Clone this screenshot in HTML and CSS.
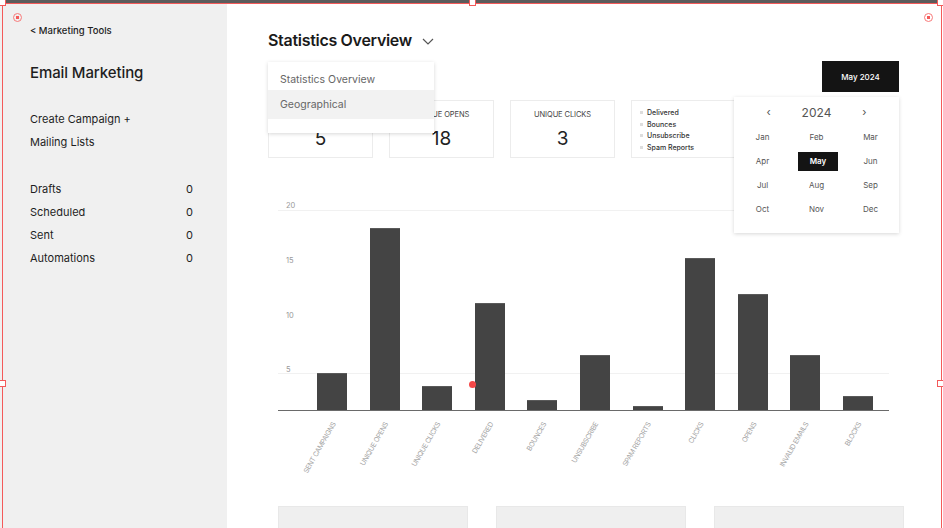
FILE: index.html
```html
<!DOCTYPE html>
<html lang="en">
<head>
<meta charset="utf-8">
<title>Email Marketing – Statistics Overview</title>
<link rel="stylesheet" href="styles.css">
</head>
<body>
<div class="page">
  <div class="topbar"></div>
  <div class="app">
    <aside class="sidebar">
      <div class="back">&lt; Marketing Tools</div>
      <h1 class="side-title">Email Marketing</h1>
      <ul class="side-nav">
        <li>Create Campaign +</li>
        <li>Mailing Lists</li>
      </ul>
      <ul class="side-stats">
        <li><span>Drafts</span><span>0</span></li>
        <li><span>Scheduled</span><span>0</span></li>
        <li><span>Sent</span><span>0</span></li>
        <li><span>Automations</span><span>0</span></li>
      </ul>
    </aside>

    <main class="main">
      <div class="header">
        <h2 class="title">Statistics Overview</h2>
        <svg class="chev" width="12" height="7" viewBox="0 0 12 7"><path d="M1 1l5 5 5-5" fill="none" stroke="#555" stroke-width="1.2"/></svg>
        <div class="dropdown">
          <div class="dd-item first">Statistics Overview</div>
          <div class="dd-item active">Geographical</div>
        </div>
      </div>

      <div class="toolbar">
        <div class="date-wrap">
          <button class="date-btn">May 2024</button>
          <div class="calendar">
            <div class="cal-head">
              <span class="cal-arrow">&#8249;</span>
              <span class="cal-year">2024</span>
              <span class="cal-arrow">&#8250;</span>
            </div>
            <div class="cal-grid">
              <span class="m"><i>Jan</i></span><span class="m"><i>Feb</i></span><span class="m"><i>Mar</i></span>
              <span class="m"><i>Apr</i></span><span class="m sel-m"><i>May</i></span><span class="m"><i>Jun</i></span>
              <span class="m"><i>Jul</i></span><span class="m"><i>Aug</i></span><span class="m"><i>Sep</i></span>
              <span class="m"><i>Oct</i></span><span class="m"><i>Nov</i></span><span class="m"><i>Dec</i></span>
            </div>
          </div>
        </div>
      </div>

      <div class="cards">
        <div class="card"><div class="card-label">Sent Campaigns</div><div class="card-num">5</div></div>
        <div class="card"><div class="card-label">Unique Opens</div><div class="card-num">18</div></div>
        <div class="card"><div class="card-label">Unique Clicks</div><div class="card-num">3</div></div>
        <div class="card legend">
          <div class="lg"><b></b>Delivered</div>
          <div class="lg"><b></b>Bounces</div>
          <div class="lg"><b></b>Unsubscribe</div>
          <div class="lg"><b></b>Spam Reports</div>
        </div>
      </div>

      <div class="chart">
        <div class="plot">
          <div class="grid g20"></div>
          <div class="grid g5"></div>
          <span class="ylab y20">20</span>
          <span class="ylab y15">15</span>
          <span class="ylab y10">10</span>
          <span class="ylab y5">5</span>
          <div class="col"><div class="bar" style="height:37px"></div></div>
          <div class="col"><div class="bar" style="height:182px"></div></div>
          <div class="col"><div class="bar" style="height:24px"></div></div>
          <div class="col"><div class="bar" style="height:107px"></div></div>
          <div class="col"><div class="bar" style="height:10px"></div></div>
          <div class="col"><div class="bar" style="height:55px"></div></div>
          <div class="col"><div class="bar" style="height:4px"></div></div>
          <div class="col"><div class="bar" style="height:152px"></div></div>
          <div class="col"><div class="bar" style="height:116px"></div></div>
          <div class="col"><div class="bar" style="height:55px"></div></div>
          <div class="col"><div class="bar" style="height:14px"></div></div>
        </div>
        <div class="xlabels">
          <div class="xl"><span>SENT CAMPAIGNS</span></div>
          <div class="xl"><span>UNIQUE OPENS</span></div>
          <div class="xl"><span>UNIQUE CLICKS</span></div>
          <div class="xl"><span>DELIVERED</span></div>
          <div class="xl"><span>BOUNCES</span></div>
          <div class="xl"><span>UNSUBSCRIBE</span></div>
          <div class="xl"><span>SPAM REPORTS</span></div>
          <div class="xl"><span>CLICKS</span></div>
          <div class="xl"><span>OPENS</span></div>
          <div class="xl"><span>INVALID EMAILS</span></div>
          <div class="xl"><span>BLOCKS</span></div>
        </div>
      </div>

      <div class="panels">
        <div class="panel"></div>
        <div class="panel"></div>
        <div class="panel"></div>
      </div>
    </main>
  </div>

  <!-- design-tool selection overlay -->
  <div class="selection"></div>
  <span class="handle h-tl"></span>
  <span class="handle h-tm"></span>
  <span class="handle h-tr"></span>
  <span class="handle h-ml"></span>
  <span class="handle h-mr"></span>
  <span class="target t-l"></span>
  <span class="target t-r"></span>
  <span class="dot"></span>
</div>
</body>
</html>
```

FILE: styles.css
```css
* { box-sizing: border-box; }
html, body { margin: 0; padding: 0; }
body {
  font-family: Inter, "Noto Sans", "DejaVu Sans", sans-serif;
  color: #222;
  background: #fff;
}
.page {
  position: relative;
  width: 943px;
  height: 528px;
  overflow: hidden;
}
.topbar { height: 3px; background: #5c5c5c; }
.app { display: flex; height: 525px; }

/* sidebar */
.sidebar {
  width: 227px;
  flex: none;
  background: #f0f0f0;
  padding: 21px 34px 0 30px;
}
.back { font-size: 9.5px; font-weight: 500; line-height: 14px; color: #1e1e1e; }
.side-title {
  margin: 25px 0 0;
  font-size: 15px;
  font-weight: 500;
  line-height: 20px;
  color: #1e1e1e;
  letter-spacing: -0.1px;
}
.side-nav, .side-stats { list-style: none; margin: 0; padding: 0; }
.side-nav { margin-top: 24.5px; }
.side-nav li { font-size: 11px; line-height: 23px; color: #1e1e1e; }
.side-stats { margin-top: 24px; }
.side-stats li {
  display: flex;
  justify-content: space-between;
  font-size: 11px;
  line-height: 23.3px;
  color: #1e1e1e;
}

/* main */
.main { flex: 1; min-width: 0; padding: 26px 44px 0 41px; }
.header { position: relative; display: flex; align-items: center; gap: 10px; height: 22px; }
.title { margin: 0; font-size: 16px; font-weight: 600; line-height: 22px; color: #1a1a1a; letter-spacing: -0.3px; }
.chev { margin-top: 2px; }
.dropdown {
  position: absolute;
  left: 0;
  top: 33px;
  width: 166px;
  background: #fff;
  box-shadow: 0 1px 4px rgba(0,0,0,0.16);
  padding-bottom: 14px;
  z-index: 5;
}
.dd-item { font-size: 10.5px; color: #666; padding-left: 12px; }
.dd-item.first { padding-top: 8px; line-height: 20px; }
.dd-item.active { background: #f2f2f2; line-height: 29px; }

.toolbar { display: flex; justify-content: flex-end; margin-top: 10px; }
.date-wrap { position: relative; }
.date-btn {
  display: block;
  width: 77px;
  height: 31px;
  border: 0;
  background: #141414;
  color: #fff;
  font-family: inherit;
  font-size: 8px;
  font-weight: 500;
  padding: 0;
}
.calendar {
  position: absolute;
  right: 0;
  top: 36px;
  width: 165px;
  background: #fff;
  box-shadow: 0 1px 4px rgba(0,0,0,0.16);
  padding: 6px 1.5px 12px;
  z-index: 5;
}
.cal-head { display: flex; justify-content: center; align-items: center; gap: 30px; height: 18px; color: #555; }
.cal-arrow { font-size: 11px; width: 6px; text-align: center; }
.cal-year { font-size: 12px; }
.cal-grid { margin-top: 4px; display: grid; grid-template-columns: repeat(3, 54px); grid-auto-rows: 24px; }
.m { display: flex; align-items: center; justify-content: center; font-size: 8px; color: #555; }
.m i { font-style: normal; display: block; width: 40px; height: 19px; line-height: 19px; text-align: center; }
.sel-m i { background: #141414; color: #fff; font-weight: 600; margin-left: 3px; }

.cards { display: flex; gap: 16px; margin-top: 8px; }
.card {
  width: 105px;
  flex: none;
  height: 58px;
  border: 1px solid #ececec;
  padding-top: 9px;
  text-align: center;
}
.card-label { font-size: 7.5px; line-height: 10px; text-transform: uppercase; color: #444; letter-spacing: -0.1px; }
.card-num { font-size: 19px; line-height: 28px; margin-top: 5px; color: #222; }
.legend { text-align: left; padding: 6px 0 0 8px; }
.lg { display: flex; align-items: center; gap: 4px; font-size: 7px; line-height: 11.5px; color: #333; font-weight: 500; }
.lg b { width: 3px; height: 3px; background: #ddd; }

/* chart */
.chart { margin: 42px 0 0 10px; width: 611px; }
.plot {
  position: relative;
  height: 211px;
  border-bottom: 1px solid #6a6a6a;
  display: flex;
  align-items: flex-end;
  padding-left: 27.7px;
}
.grid { position: absolute; left: 0; right: 0; height: 1px; background: #f1f1f1; }
.g20 { top: 10px; }
.g5 { top: 173px; }
.ylab { position: absolute; left: 8px; font-size: 7.5px; line-height: 8px; color: #999; }
.y20 { top: 2px; }
.y15 { top: 57px; }
.y10 { top: 112px; }
.y5 { top: 166px; }
.col { position: relative; width: 52.6px; display: flex; justify-content: center; }
.bar { width: 30px; background: #444; border-top: 1px solid #5a5a5a; }
.xlabels { display: flex; padding-left: 27.7px; height: 95px; }
.xl { position: relative; width: 52.6px; }
.xl span {
  position: absolute;
  right: calc(50% - 2px);
  top: 8px;
  white-space: nowrap;
  font-size: 7px;
  line-height: 8px;
  color: #a5a5a5;
  letter-spacing: -0.35px;
  transform-origin: 100% 50%;
  transform: rotate(-60deg);
}

.panels { display: flex; gap: 28px; margin-left: 10px; }
.panel { width: 190px; flex: none; height: 40px; background: #efefef; border: 1px solid #e8e8e8; }

/* design-tool overlay */
.selection {
  position: absolute;
  left: 2px;
  top: 3px;
  right: 1px;
  bottom: -10px;
  border: 1px solid #f45a5a;
  pointer-events: none;
}
.handle {
  position: absolute;
  width: 7px;
  height: 7px;
  background: #fff;
  border: 1px solid #f45a5a;
}
.h-tl { left: -1px; top: -1px; }
.h-tm { left: 469px; top: -1px; }
.h-tr { right: -1px; top: -1px; }
.h-ml { left: -1px; top: 380px; }
.h-mr { right: -1px; top: 380px; }
.target {
  position: absolute;
  width: 9px;
  height: 9px;
  border-radius: 50%;
  border: 1.5px solid #f87a7a;
  background: radial-gradient(circle, #f45a5a 0 1.6px, transparent 2px);
}
.t-l { left: 12.5px; top: 12.5px; }
.t-r { left: 923.5px; top: 12.5px; }
.dot {
  position: absolute;
  left: 469px;
  top: 381px;
  width: 7px;
  height: 7px;
  border-radius: 50%;
  background: #f54848;
}
```
